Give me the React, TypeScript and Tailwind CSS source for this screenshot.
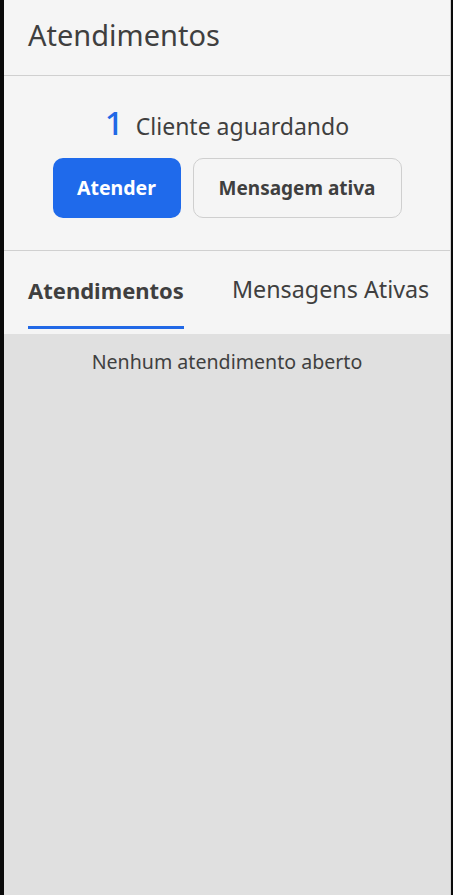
import React from 'react';

const App: React.FC = () => {
    return (
        <div className="flex h-[895px] w-[453px] bg-[#0a0a0a] font-['Noto_Sans',sans-serif] text-[#3f3f3f]">
            <div className="ml-[4px] flex w-[447px] flex-col border-r border-[#cfcfcf] bg-[#f5f5f5]">
                <div className="flex h-[76px] items-center border-b border-[#d0d0d0] px-[24px] pb-[7px]">
                    <h1 className="text-[29px] leading-none">Atendimentos</h1>
                </div>
                <div className="flex h-[175px] flex-col items-center border-b border-[#d0d0d0] pt-[30px]">
                    <p className="flex items-baseline gap-[12px] text-[23px] leading-none">
                        <span className="text-[33px] font-medium text-[#2168e6]">1</span>
                        <span>Cliente aguardando</span>
                    </p>
                    <div className="mt-[19px] flex gap-[12px]">
                        <button className="h-[60px] w-[128px] rounded-[10px] bg-[#1f6aeb] text-[19.5px] font-bold text-white">
                            Atender
                        </button>
                        <button className="h-[60px] w-[209px] rounded-[10px] border border-[#cfcfcf] bg-[#f5f5f5] text-[19px] font-bold text-[#3f3f3f]">
                            Mensagem ativa
                        </button>
                    </div>
                </div>
                <div className="flex h-[83px] items-end gap-[48px] overflow-hidden pl-[24px]">
                    <div className="flex shrink-0 flex-col pb-[5px]">
                        <span className="whitespace-nowrap pb-[25px] text-[22px] font-bold leading-none">Atendimentos</span>
                        <span className="h-[3px] bg-[#2168e6]" />
                    </div>
                    <span className="shrink-0 whitespace-nowrap pb-[33px] text-[23.3px] leading-none">Mensagens Ativas</span>
                </div>
                <div className="flex flex-1 justify-center bg-[#e0e0e0] pt-[18px]">
                    <p className="text-[19.6px] leading-none">Nenhum atendimento aberto</p>
                </div>
            </div>
        </div>
    );
};

export default App;
